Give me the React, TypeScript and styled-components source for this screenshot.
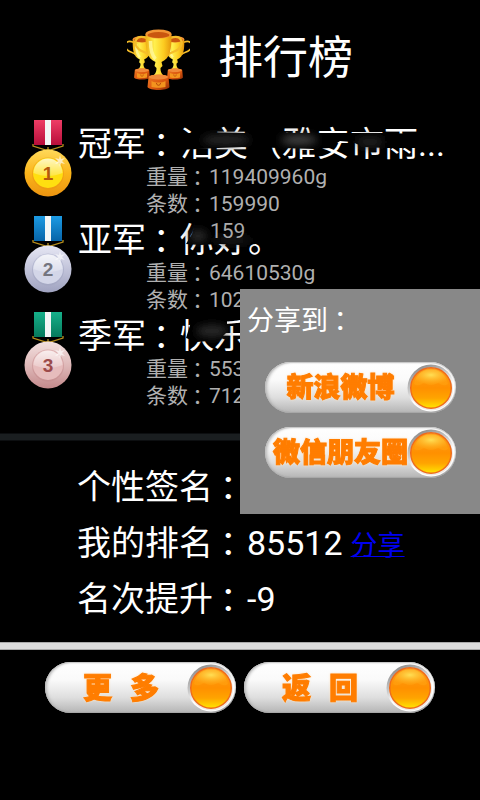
import React from "react";
import styled, { createGlobalStyle } from "styled-components";

const CJK = `Roboto, "Noto Sans CJK SC", sans-serif`;

const GlobalStyle = createGlobalStyle`
  * { box-sizing: border-box; }
  body { margin: 0; background: #000; color: #fff; font-family: ${CJK}; }
`;

const Screen = styled.main`
  position: relative;
  min-height: 100vh;
  background: #000;
  overflow: hidden;
`;

const Header = styled.header`
  display: flex;
  align-items: center;
  justify-content: center;
  gap: 28px;
  height: 120px;
`;

const TrophyArt = styled.svg`
  width: 63px;
  height: 62px;
`;

const Title = styled.h1`
  margin: 0;
  padding-bottom: 2px;
  font-size: 45px;
  line-height: 60px;
  font-weight: 400;
`;

const Ranking = styled.ol`
  margin: 0;
  padding: 0 24px 26px;
  list-style: none;
`;

const RankRow = styled.li`
  display: flex;
  gap: 6px;
  height: 96px;
`;

const MedalArt = styled.svg`
  flex: none;
  width: 48px;
  height: 77px;
`;

const RankBody = styled.div`
  flex: 1;
  min-width: 0;
`;

const NameLine = styled.h2`
  display: flex;
  margin: 0;
  padding-top: 4px;
  font-size: 34px;
  line-height: 40px;
  font-weight: 400;
  white-space: nowrap;
`;

const Name = styled.span`
  position: relative;
`;

const Smudge = styled.svg`
  position: absolute;
  left: 0;
  top: 0;
  width: 264px;
  height: 40px;
  overflow: visible;
`;

const Residue = styled.span`
  position: absolute;
  left: 30px;
  top: 0;
  font-size: 21px;
  line-height: 22px;
  color: #aaa;
`;

const Details = styled.div`
  padding-left: 68px;
  font-size: 21px;
  line-height: 27px;
  color: #b0b0b0;
`;

const ColonMark = styled.span`
  margin: 0 -0.2em 0 0.2em;
`;

const Divider = styled.hr<{ $tone: string; $edge: string }>`
  height: 6px;
  margin: 0;
  border: 0;
  background: ${(p) => p.$tone};
  box-shadow: 0 0 0 1px ${(p) => p.$edge};
`;

const Stats = styled.section`
  padding: 19px 24px 16px 77px;
  font-size: 34px;
  line-height: 56px;
`;

const ShareLink = styled.a`
  margin-left: 8px;
  font-size: 27px;
  line-height: 40px;
  color: #0000f0;
  text-decoration: underline;
  text-decoration-thickness: 1px;
`;

const Footer = styled.footer`
  display: flex;
  justify-content: center;
  gap: 8px;
  padding-top: 13px;
`;

const Pill = styled.button`
  display: flex;
  align-items: center;
  width: 191px;
  height: 51px;
  padding: 0 1px 0 0;
  border: 0;
  border-radius: 26px;
  background: linear-gradient(#fff 0%, #fafafa 35%, #dedede 70%, #b4b4b4 100%);
  box-shadow: inset 2px 0 3px #bbb, inset 0 -1px 1px #999, inset 0 1px 1px #ccc;
  font-family: "Noto Sans CJK SC", sans-serif;
  cursor: pointer;
`;

const PillText = styled.span<{ $size: number; $gap: number }>`
  flex: 1;
  min-width: 0;
  display: flex;
  justify-content: center;
  gap: ${(p) => p.$gap}px;
  padding: 0 0 4px 10px;
  font-size: ${(p) => p.$size}px;
  line-height: 40px;
  font-weight: 900;
  color: #ff7d00;
  -webkit-text-stroke: 1px #ff7d00;
  filter: drop-shadow(0 0 1px #ffe3c0);
  white-space: nowrap;
`;

const OrbArt = styled.svg`
  flex: none;
  width: 48px;
  height: 48px;
`;

const SharePanel = styled.aside`
  position: absolute;
  top: 289px;
  right: 0;
  width: 50%;
  height: 225px;
  padding-top: 12px;
  background: #888;
`;

const ShareTitle = styled.h2`
  margin: 0 0 21px 7px;
  font-size: 27px;
  line-height: 40px;
  font-weight: 400;
`;

const ShareList = styled.div`
  display: flex;
  flex-direction: column;
  align-items: center;
  gap: 14px;
`;

const Colon = () => <ColonMark>：</ColonMark>;

function Orb() {
  return (
    <OrbArt viewBox="0 0 48 48" aria-hidden="true">
      <defs>
        <linearGradient id="orbRim" x1="0" y1="0" x2="0.5" y2="1">
          <stop offset="0" stopColor="#777" />
          <stop offset="0.45" stopColor="#c6c6c6" />
          <stop offset="0.7" stopColor="#fff" />
          <stop offset="1" stopColor="#fff" />
        </linearGradient>
        <linearGradient id="orbFill" x1="0" y1="0" x2="0" y2="1">
          <stop offset="0" stopColor="#ff9f1c" />
          <stop offset="0.5" stopColor="#ff9000" />
          <stop offset="0.75" stopColor="#ffa400" />
          <stop offset="1" stopColor="#ffe600" />
        </linearGradient>
        <radialGradient id="orbShine" cx="0.5" cy="0.35" r="0.6">
          <stop offset="0" stopColor="#ffdf55" />
          <stop offset="1" stopColor="#ffb01a" stopOpacity="0.3" />
        </radialGradient>
      </defs>
      <circle cx="24" cy="24" r="23.5" fill="url(#orbRim)" />
      <circle cx="24.500" cy="25" r="21.5" fill="#efe9e4" />
      <circle cx="24" cy="24" r="20.300" fill="url(#orbFill)" stroke="#ee6a1c" strokeWidth="1.4" />
      <path d="M7 20C9 10 16 5.500 24 5.500s15 4.500 17 14.500c-3 2-6 1-8 0-2-2-4 1-9 1s-7-3-9-1c-2 1-5 2-8 0z" fill="url(#orbShine)" />
    </OrbArt>
  );
}

function PillButton({ words, size = 27, gap = 0 }: { words: string[]; size?: number; gap?: number }) {
  return (
    <Pill type="button">
      <PillText $size={size} $gap={gap}>
        {words.map((w) => (
          <span key={w}>{w}</span>
        ))}
      </PillText>
      <Orb />
    </Pill>
  );
}

type MedalTone = { ribbon: string; ribbonDark: string; light: string; mid: string; dark: string; inner: string; digit: string };

const tones: MedalTone[] = [
  { ribbon: "#ee3d66", ribbonDark: "#b80e3a", light: "#ffd95a", mid: "#fbb51a", dark: "#ec9410", inner: "#ffdf10", digit: "#b4580c" },
  { ribbon: "#1c9be4", ribbonDark: "#0764a8", light: "#e6e7f4", mid: "#c2c4da", dark: "#a0a3c0", inner: "#d3d6e8", digit: "#74757f" },
  { ribbon: "#16b08a", ribbonDark: "#067a5c", light: "#f3e0df", mid: "#dfb9b9", dark: "#c48a8c", inner: "#e6bcbc", digit: "#9c4a4a" },
];

function Medal({ place }: { place: number }) {
  const t = tones[place - 1];
  const id = `medal${place}`;
  return (
    <MedalArt viewBox="0 0 48 77" role="img" aria-label={`${place}`}>
      <defs>
        <linearGradient id={`${id}r`} x1="0" y1="0" x2="0" y2="1">
          <stop offset="0" stopColor={t.ribbon} />
          <stop offset="1" stopColor={t.ribbonDark} />
        </linearGradient>
        <linearGradient id={`${id}o`} x1="0" y1="0" x2="0" y2="1">
          <stop offset="0" stopColor={t.light} />
          <stop offset="0.5" stopColor={t.mid} />
          <stop offset="1" stopColor={t.dark} />
        </linearGradient>
        <linearGradient id={`${id}i`} x1="0" y1="0" x2="0" y2="1">
          <stop offset="0" stopColor="#fff" stopOpacity="0.75" />
          <stop offset="1" stopColor="#fff" stopOpacity="0.2" />
        </linearGradient>
      </defs>
      <path d="M10 0h28v25H10z" fill={`url(#${id}r)`} />
      <path d="M21 0h6v25h-6z" fill="#f3f6f6" />
      <path d="M9 24v2l13 4h4l13-4v-2M24 27v6" fill="none" stroke="#b8901e" strokeWidth="1.3" />
      <circle cx="24" cy="53" r="23.5" fill={`url(#${id}o)`} />
      <circle cx="24" cy="53.5" r="16" fill={t.dark} opacity="0.5" />
      <circle cx="24" cy="53" r="15" fill={t.inner} />
      <path d="M9.500 53a14.500 14.500 0 0 1 29 0c-9 4-20 4-29 0z" fill={`url(#${id}i)`} />
      <text x="24" y="60" textAnchor="middle" fontFamily="Liberation Sans, sans-serif" fontWeight="700" fontSize="19" fill={t.digit}>
        {place}
      </text>
      <path d="M36 35l1 4 4-1-3 3 3 3-4-1-1 4-1-4-4 1 3-3-3-3 4 1z" fill="#fff" opacity="0.65" />
    </MedalArt>
  );
}

function Cup() {
  return (
    <>
      <path d="M-12-22c-11-4-14 5-8 11 3 3 8 3 11 6M12-22c11-4 14 5 8 11-3 3-8 3-11 6" fill="none" stroke="#f5bd2a" strokeWidth="2.200" />
      <path d="M-13-26c0 16 1 24 10 28l-1 4 2 2c0 4-1 6-5 9H7C3 14 2 12 2 8l2-2-1-4c9-4 10-12 10-28z" fill="url(#cupGold)" />
      <ellipse cx="0" cy="-26" rx="13" ry="4.500" fill="#f29434" />
      <ellipse cx="0" cy="-25" rx="11" ry="3" fill="#c9560f" />
      <path d="M-8-19c0 9 1 14 5 18" fill="none" stroke="#fff9a0" strokeWidth="3.500" opacity="0.8" />
      <path d="M-10 17c0-3 20-3 20 0l1 10c-2 4-20 4-22 0z" fill="url(#cupBase)" />
      <ellipse cx="0" cy="17" rx="9.500" ry="2.500" fill="#f08a3a" />
      <path d="M-7 21c4 2 10 2 14 0v6c-4 1-10 1-14 0z" fill="#f3941e" />
      <path d="M-2 23c0 3 4 3 4 0" fill="none" stroke="#b5480a" />
    </>
  );
}

function Trophies() {
  return (
    <TrophyArt viewBox="0 0 63 62" aria-hidden="true">
      <defs>
        <linearGradient id="cupGold" x1="0" y1="0" x2="1" y2="0">
          <stop offset="0" stopColor="#efae14" />
          <stop offset="0.35" stopColor="#fff04e" />
          <stop offset="0.7" stopColor="#fccb20" />
          <stop offset="1" stopColor="#e5960c" />
        </linearGradient>
        <linearGradient id="cupBase" x1="0" y1="0" x2="1" y2="1">
          <stop offset="0" stopColor="#f07a24" />
          <stop offset="0.6" stopColor="#d9560f" />
          <stop offset="1" stopColor="#8c2a04" />
        </linearGradient>
      </defs>
      <g transform="translate(15 29) scale(0.720)"><Cup /></g>
      <g transform="translate(48 29) scale(0.720)"><Cup /></g>
      <g transform="translate(31.500 31)"><Cup /></g>
    </TrophyArt>
  );
}

function SmudgeDefs() {
  return (
    <defs>
      <filter id="soft" x="-20%" y="-50%" width="140%" height="200%">
        <feGaussianBlur stdDeviation="0.7" />
      </filter>
      <filter id="haze" x="-50%" y="-100%" width="200%" height="300%">
        <feGaussianBlur stdDeviation="4" />
      </filter>
    </defs>
  );
}

interface Entry {
  rank: string;
  name: React.ReactNode;
  weight: string;
  count: string;
}

const entries: Entry[] = [
  {
    rank: "冠军",
    name: (
      <Name>
        浩美（雅安市雨...
        <Smudge viewBox="0 4 264 40" aria-hidden="true">
          <SmudgeDefs />
          <path d="M-2 14L22 12 66 13 102 13 134 13 172 13 206 13 240 14 240 28 206 28 184 27 172 22 160 21 150 28 134 29 102 28 62 27 38 28 -2 30z" fill="#000" filter="url(#soft)" />
          <path d="M12 2h24v20H12zM68 2h34v20H68z" fill="#000" />
          <ellipse cx="46" cy="20" rx="24" ry="5" fill="#2a2a2a" filter="url(#haze)" />
          <ellipse cx="119" cy="20" rx="18" ry="5" fill="#444" filter="url(#haze)" />
          <ellipse cx="190" cy="22" rx="14" ry="5" fill="#242424" filter="url(#haze)" />
        </Smudge>
      </Name>
    ),
    weight: "119409960g",
    count: "159990",
  },
  {
    rank: "亚军",
    name: (
      <Name>
        你好。
        <Smudge viewBox="0 4 264 40" aria-hidden="true">
          <path d="M16 2h60v26l-16 1-20-1-20 1-14-1 6-10z" fill="#000" filter="url(#soft)" />
          <ellipse cx="18" cy="20" rx="9" ry="6" fill="#2c2c2c" filter="url(#haze)" />
          <ellipse cx="52" cy="24" rx="20" ry="3" fill="#242424" filter="url(#haze)" />
        </Smudge>
        <Residue>159</Residue>
      </Name>
    ),
    weight: "64610530g",
    count: "102030",
  },
  {
    rank: "季军",
    name: (
      <Name>
        快乐
        <Smudge viewBox="0 4 264 40" aria-hidden="true">
          <path d="M13 4l34 2v14l-8 8-22 2-11-4z" fill="#000" filter="url(#soft)" />
          <ellipse cx="32" cy="19" rx="16" ry="6" fill="#2c2c2c" filter="url(#haze)" />
        </Smudge>
      </Name>
    ),
    weight: "55368210g",
    count: "71250",
  },
];

export default function App() {
  return (
    <Screen>
      <GlobalStyle />
      <Header>
        <Trophies />
        <Title>排行榜</Title>
      </Header>
      <Ranking>
        {entries.map((e, i) => (
          <RankRow key={e.rank}>
            <Medal place={i + 1} />
            <RankBody>
              <NameLine>
                <span>{e.rank}<Colon /></span>
                {e.name}
              </NameLine>
              <Details>
                <div>重量<Colon />{e.weight}</div>
                <div>条数<Colon />{e.count}</div>
              </Details>
            </RankBody>
          </RankRow>
        ))}
      </Ranking>
      <Divider $tone="#1a1e20" $edge="#0c0e10" />
      <Stats>
        <div>个性签名<Colon /></div>
        <div>
          我的排名<Colon />85512
          <ShareLink href="#share">分享</ShareLink>
        </div>
        <div>名次提升<Colon />-9</div>
      </Stats>
      <Divider $tone="#dcdcdc" $edge="#aaa" />
      <Footer>
        <PillButton words={["更", "多"]} size={29} gap={18} />
        <PillButton words={["返", "回"]} size={29} gap={18} />
      </Footer>
      <SharePanel>
        <ShareTitle>分享到<Colon /></ShareTitle>
        <ShareList>
          <PillButton words={["新浪微博"]} />
          <PillButton words={["微信朋友圈"]} />
        </ShareList>
      </SharePanel>
    </Screen>
  );
}
